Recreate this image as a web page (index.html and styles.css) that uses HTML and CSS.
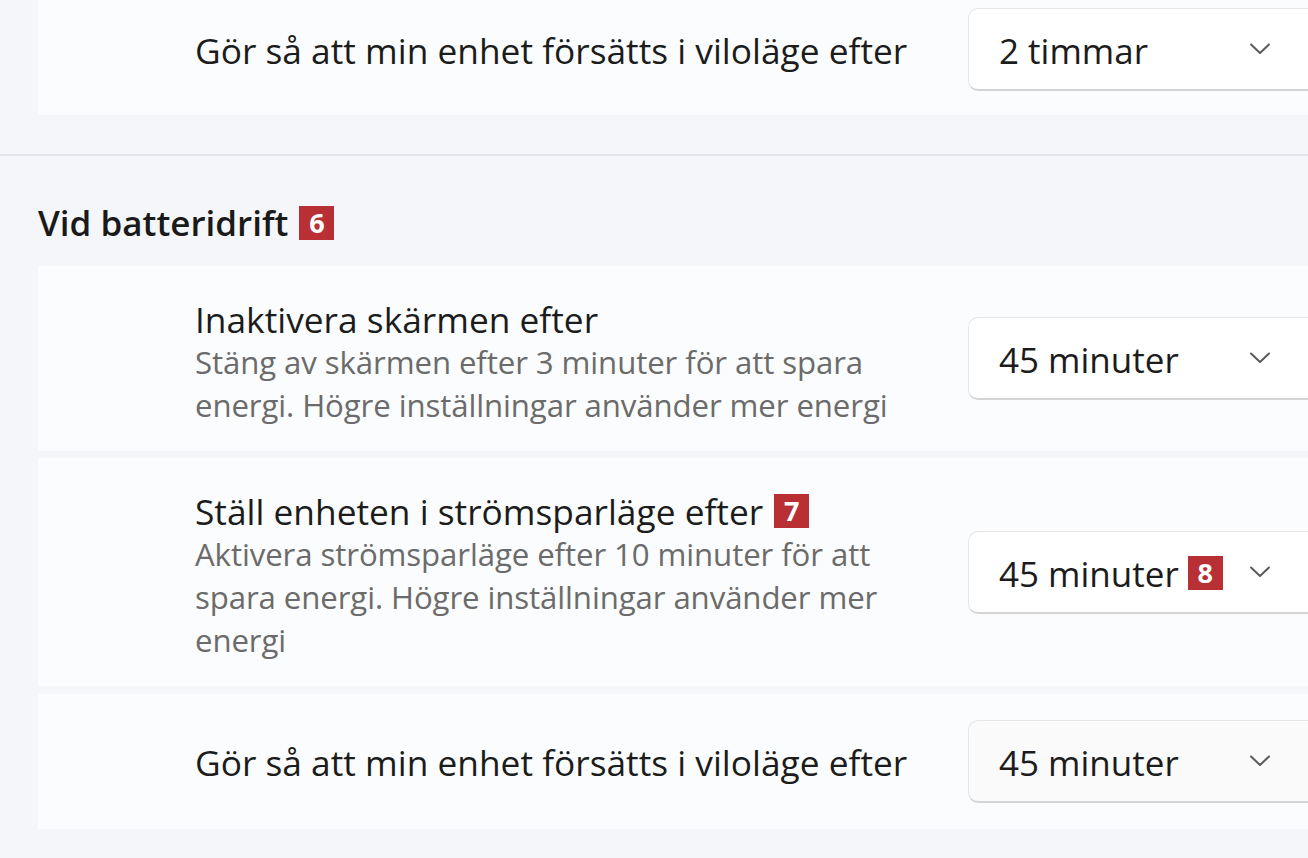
FILE: index.html
```html
<!DOCTYPE html>
<html lang="sv">
<head>
<meta charset="utf-8">
<title>Energiinställningar</title>
<link rel="stylesheet" href="styles.css">
</head>
<body>
<div class="page">
  <div class="card card-top">
    <div class="text">
      <div class="title">Gör så att min enhet försätts i viloläge efter</div>
    </div>
    <div class="dropdown">
      <span class="value">2 timmar</span>
      <svg class="chev" width="22" height="12" viewBox="0 0 22 12"><path d="M2 1.5 L11 10 L20 1.5" fill="none" stroke="#5a5a5a" stroke-width="2" stroke-linecap="round" stroke-linejoin="round"/></svg>
    </div>
  </div>

  <div class="divider"></div>

  <h2 class="heading">Vid batteridrift <span class="badge">6</span></h2>

  <div class="card card-2">
    <div class="text text-multi">
      <div class="title">Inaktivera skärmen efter</div>
      <div class="desc">Stäng av skärmen efter 3 minuter för att spara energi. Högre inställningar använder mer energi</div>
    </div>
    <div class="dropdown">
      <span class="value">45 minuter</span>
      <svg class="chev" width="22" height="12" viewBox="0 0 22 12"><path d="M2 1.5 L11 10 L20 1.5" fill="none" stroke="#5a5a5a" stroke-width="2" stroke-linecap="round" stroke-linejoin="round"/></svg>
    </div>
  </div>

  <div class="card card-3">
    <div class="text text-multi">
      <div class="title">Ställ enheten i strömsparläge efter <span class="badge">7</span></div>
      <div class="desc">Aktivera strömsparläge efter 10 minuter för att spara energi. Högre inställningar använder mer energi</div>
    </div>
    <div class="dropdown">
      <span class="value">45 minuter <span class="badge">8</span></span>
      <svg class="chev" width="22" height="12" viewBox="0 0 22 12"><path d="M2 1.5 L11 10 L20 1.5" fill="none" stroke="#5a5a5a" stroke-width="2" stroke-linecap="round" stroke-linejoin="round"/></svg>
    </div>
  </div>

  <div class="card card-4">
    <div class="text">
      <div class="title">Gör så att min enhet försätts i viloläge efter</div>
    </div>
    <div class="dropdown dropdown-soft">
      <span class="value">45 minuter</span>
      <svg class="chev" width="22" height="12" viewBox="0 0 22 12"><path d="M2 1.5 L11 10 L20 1.5" fill="none" stroke="#5a5a5a" stroke-width="2" stroke-linecap="round" stroke-linejoin="round"/></svg>
    </div>
  </div>
</div>
</body>
</html>
```

FILE: styles.css
```css
html, body {
  margin: 0;
  padding: 0;
}
body {
  background: #f4f6f9;
  font-family: "Open Sans", "Noto Sans", "DejaVu Sans", sans-serif;
  color: #1b1b1b;
  overflow: hidden;
  width: 1308px;
  height: 858px;
}
.page {
  width: 1350px;
  display: flex;
  flex-direction: column;
}
.card {
  margin-left: 38px;
  width: 1312px;
  background: #fbfcfd;
  display: flex;
  align-items: center;
  box-sizing: border-box;
  padding-left: 157px;
}
.card-top {
  margin-top: -16px;
  height: 131px;
}
.card-2 {
  height: 185px;
}
.card-3 {
  margin-top: 7px;
  height: 228px;
}
.card-4 {
  margin-top: 8px;
  height: 135px;
}
.text {
  flex: 0 0 773px;
  display: flex;
  flex-direction: column;
}
.text-multi {
  padding-top: 7px;
}
.title {
  font-size: 35.3px;
  line-height: 44px;
  color: #1c1c1c;
  display: flex;
  align-items: center;
  white-space: nowrap;
}
.desc {
  font-size: 31.2px;
  line-height: 43px;
  color: #6b6b6b;
  width: 725px;
  letter-spacing: -0.1px;
}
.divider {
  margin-top: 39px;
  height: 2px;
  background: #e1e5ea;
}
.heading {
  margin: 0;
  margin-left: 38px;
  margin-top: 44px;
  margin-bottom: 20px;
  font-size: 35px;
  line-height: 46px;
  font-weight: 600;
  color: #1a1a1a;
  display: flex;
  align-items: center;
}
.badge {
  display: inline-flex;
  align-items: center;
  justify-content: center;
  width: 35px;
  height: 34px;
  background: #b83034;
  color: #ffffff;
  font-weight: 700;
  font-size: 27px;
  line-height: 34px;
  letter-spacing: 0;
  margin-left: 11px;
}
.dropdown {
  width: 360px;
  height: 83px;
  box-sizing: border-box;
  background: #ffffff;
  border: 1px solid #e6e6e6;
  border-bottom: 2px solid #d4d4d4;
  border-radius: 10px;
  display: flex;
  align-items: center;
  padding-left: 30px;
  padding-right: 56px;
}
.dropdown-soft {
  background: #fafafa;
}
.value {
  font-size: 35px;
  color: #1c1c1c;
  display: flex;
  align-items: center;
  padding-top: 3px;
}
.value .badge {
  margin-left: 9px;
}
.chev {
  margin-left: auto;
}
```
